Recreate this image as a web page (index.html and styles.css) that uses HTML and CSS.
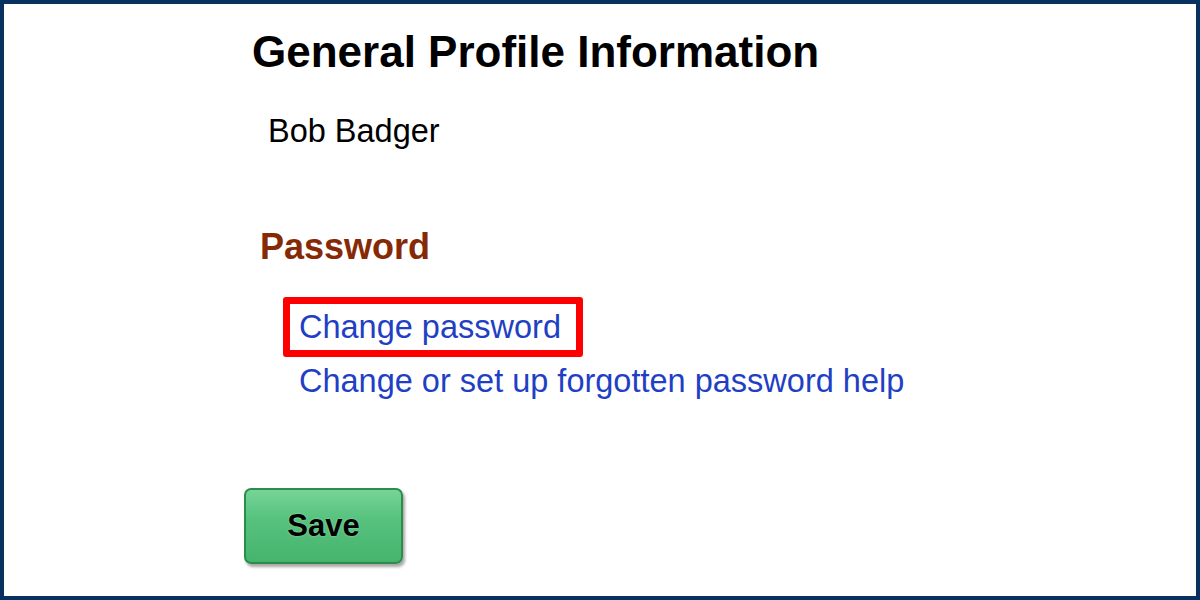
FILE: index.html
```html
<!DOCTYPE html>
<html lang="en">

<head>
    <meta charset="UTF-8">
    <meta name="viewport" content="width=device-width, initial-scale=1.0">
    <link rel="stylesheet" href="styles.css">
    <title>General Profile Information</title>
</head>

<body>
    <div class="frame">
        <div class="content">
            <h1 class="page-title">General Profile Information</h1>
            <p class="user-name">Bob Badger</p>

            <h2 class="section-title">Password</h2>
            <ul class="links">
                <li><a href="#" class="highlight">Change password</a></li>
                <li><a href="#">Change or set up forgotten password help</a></li>
            </ul>

            <button class="save-btn" type="button">Save</button>
        </div>
    </div>
</body>

</html>
```

FILE: styles.css
```css
* {
    margin: 0;
    padding: 0;
    box-sizing: border-box;
}

body {
    width: 1200px;
    height: 600px;
    background-color: #fff;
    font-family: "Liberation Sans", Arial, sans-serif;
    overflow: hidden;
}

.frame {
    width: 1200px;
    height: 600px;
    border: 4px solid #08315f;
    background-color: #fff;
}

.content {
    display: flex;
    flex-direction: column;
    align-items: flex-start;
    padding-left: 236px;
    padding-top: 23px;
}

.page-title {
    margin-left: 12px;
    font-size: 44px;
    line-height: 1.15;
    font-weight: bold;
    color: #000;
}

.user-name {
    margin-left: 28px;
    margin-top: 35px;
    font-size: 32.5px;
    line-height: 1.15;
    color: #000;
}

.section-title {
    margin-left: 20px;
    margin-top: 76px;
    font-size: 36px;
    line-height: 1.15;
    font-weight: bold;
    color: #862a06;
}

.links {
    list-style: none;
    margin-left: 59px;
    margin-top: 30px;
}

.links li {
    font-size: 32.5px;
    line-height: 1.15;
}

.links a {
    color: #1f3fc4;
    text-decoration: none;
}

.links a.highlight {
    display: inline-block;
    margin-left: -16px;
    padding: 5px 15px 3px 9px;
    border: 7px solid #ff0000;
    border-radius: 3px;
}

.links li + li {
    margin-top: 6px;
}

.save-btn {
    margin-left: 4px;
    margin-top: 88px;
    width: 159px;
    height: 76px;
    border: 2px solid #2b8c4c;
    border-radius: 7px;
    background: linear-gradient(to bottom, #76d497 0%, #56c27e 40%, #47b46d 100%);
    box-shadow: 2px 3px 3px rgba(0, 0, 0, 0.35);
    font-family: "Liberation Sans", Arial, sans-serif;
    font-size: 31px;
    font-weight: bold;
    color: #000;
    text-shadow: 0 0 2px #a6e6bb;
    cursor: pointer;
}
```
